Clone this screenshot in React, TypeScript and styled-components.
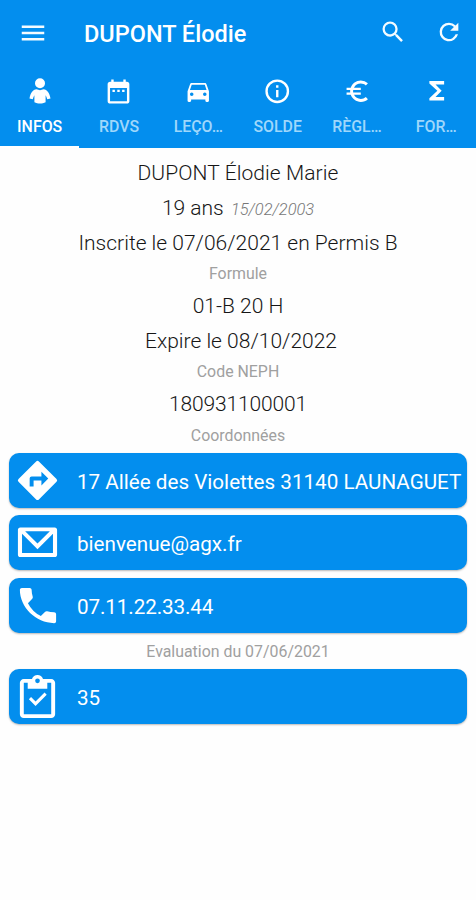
import React from 'react';
import styled, { createGlobalStyle } from 'styled-components';

const BLUE = '#038eee';

const GlobalStyle = createGlobalStyle`
  *, *::before, *::after { box-sizing: border-box; }
  body {
    margin: 0;
    background: #fefefe;
    font-family: Roboto, 'Liberation Sans', sans-serif;
  }
`;

const Screen = styled.main`
  width: 476px;
  height: 900px;
  overflow: hidden;
  background: #fefefe;
`;

const Header = styled.header`
  height: 148px;
  background: ${BLUE};
  color: #fff;
`;

const Toolbar = styled.div`
  display: flex;
  align-items: center;
  height: 66px;
  padding: 0 13px 0 17.5px;
`;

const IconButton = styled.button`
  display: flex;
  padding: 0;
  border: 0;
  background: none;
  color: #f4fbff;
`;

const Title = styled.h1`
  flex: 1;
  margin: 2px 0 0 36.5px;
  font-size: 23.5px;
  font-weight: 500;
  line-height: 28px;
`;

const Actions = styled.div`
  display: flex;
  gap: 28px;
  margin-bottom: 2px;
`;

const Tabs = styled.nav`
  display: grid;
  grid-template-columns: repeat(6, 1fr);
  height: 82px;
`;

const Tab = styled.button<{ $active?: boolean }>`
  display: flex;
  flex-direction: column;
  align-items: center;
  padding: 11px 0 0;
  border: 0;
  border-bottom: 2px solid ${(p) => (p.$active ? '#fff' : 'transparent')};
  background: none;
  color: #fff;
  font-family: inherit;
`;

const TabIcon = styled.span`
  display: flex;
  align-items: center;
  justify-content: center;
  height: 28px;
`;

const TabLabel = styled.span<{ $active?: boolean }>`
  margin-top: 12px;
  font-size: 15.9px;
  font-weight: 500;
  line-height: 20px;
  white-space: nowrap;
  color: ${(p) => (p.$active ? '#fff' : '#9fd7fb')};
`;

const Details = styled.section`
  height: 303.5px;
  padding-top: 8px;
  text-align: center;
`;

const Line = styled.p<{ $spacing?: number; $indent?: number }>`
  margin: 0;
  height: 34.8px;
  padding-left: ${(p) => p.$indent ?? 0}px;
  font-size: 21px;
  font-weight: 300;
  line-height: 35px;
  letter-spacing: ${(p) => p.$spacing ?? 0}px;
  white-space: nowrap;
  color: #161616;
`;

const BirthDate = styled.em`
  margin-left: 2px;
  font-size: 16.4px;
  color: #777;
`;

const Caption = styled.p`
  margin: 0;
  height: 28.5px;
  font-size: 15.9px;
  line-height: 28.5px;
  text-align: center;
  color: #a0a0a0;
`;

const CardList = styled.section`
  display: flex;
  flex-direction: column;
  gap: 7.75px;
  padding: 1px 9.5px 0 9px;
`;

const Card = styled.button`
  display: flex;
  align-items: center;
  height: 55px;
  padding: 0 0 0 5px;
  border: 0;
  border-radius: 10px;
  background: ${BLUE};
  box-shadow: 0 1px 2px rgba(0, 0, 0, 0.28);
  color: #fff;
  font-family: inherit;

  svg { flex: none; }
`;

const CardText = styled.span<{ $spacing?: number }>`
  margin: 3px 0 0 16px;
  font-size: 20.65px;
  line-height: 28px;
  letter-spacing: ${(p) => p.$spacing ?? 0}px;
  white-space: nowrap;
`;

const Evaluation = styled.div`
  height: 34.5px;
  padding-top: 5px;
`;

const Glyph = ({ d, size }: { d: string; size: number }) => (
  <svg width={size} height={size} viewBox="0 0 24 24" fill="currentColor" aria-hidden="true">
    <path fillRule="evenodd" d={d} />
  </svg>
);

const icons = {
  menu: 'M3 18h18v-2H3v2zm0-5h18v-2H3v2zm0-7v2h18V6H3z',
  search:
    'M15.5 14h-.79l-.28-.27A6.47 6.47 0 0 0 16 9.5 6.5 6.5 0 1 0 9.5 16c1.61 0 3.09-.59 4.23-1.57l.27.28v.79l5 4.99L20.49 19l-4.99-5zm-6 0C7.01 14 5 11.99 5 9.5S7.01 5 9.5 5 14 7.01 14 9.5 11.99 14 9.5 14z',
  refresh:
    'M17.65 6.35A7.96 7.96 0 0 0 12 4a8 8 0 1 0 7.73 10h-2.08A6 6 0 1 1 12 6c1.66 0 3.14.69 4.22 1.78L13 11h7V4l-2.35 2.35z',
  person:
    'M12 1a4.300 4.300 0 1 1 0 8.600A4.300 4.300 0 0 1 12 1zM9 10.600c1.900.9 4.100.9 6 0 3.200.4 5.200 3.200 6 7.800l-2.800.7c-.4-1.500-.8-2.600-1.400-3.400V21.600c-2.900 1.600-6.700 1.600-9.600 0V15.700c-.6.8-1 1.900-1.400 3.400L3 18.400c.8-4.600 2.800-7.400 6-7.800z',
  calendar:
    'M19 4h-1V2h-2v2H8V2H6v2H5c-1.110 0-2 .9-2 2v14c0 1.100.890 2 2 2h14c1.100 0 2-.9 2-2V6c0-1.100-.9-2-2-2zm0 16H5V9h14v11zM7 10.500h2v2H7zm4 0h2v2h-2zm4 0h2v2h-2z',
  car: 'M18.920 6.010C18.720 5.420 18.160 5 17.500 5h-11c-.660 0-1.210.420-1.420 1.010L3 12v8c0 .550.450 1 1 1h1c.550 0 1-.450 1-1v-1h12v1c0 .550.450 1 1 1h1c.550 0 1-.450 1-1v-8l-2.080-5.990zM6.500 16a1.500 1.500 0 1 1 0-3 1.500 1.500 0 0 1 0 3zm11 0a1.500 1.500 0 1 1 0-3 1.500 1.500 0 0 1 0 3zM5 11l1.500-4.500h11L19 11H5z',
  info: 'M11 7h2v2h-2zm0 4h2v6h-2zm1-9a10 10 0 1 0 0 20 10 10 0 0 0 0-20zm0 18a8 8 0 1 1 0-16 8 8 0 0 1 0 16z',
  euro: 'M15 18.500c-2.510 0-4.680-1.420-5.760-3.500H15v-2H8.580c-.050-.330-.080-.660-.080-1s.030-.670.080-1H15V9H9.240A6.490 6.490 0 0 1 15 5.500c1.610 0 3.090.590 4.230 1.570L21 5.300A8.960 8.960 0 0 0 15 3c-3.920 0-7.240 2.510-8.480 6H3v2h3.060a8.260 8.260 0 0 0 0 2H3v2h3.520c1.240 3.490 4.560 6 8.480 6 2.310 0 4.410-.870 6-2.300l-1.780-1.770A6.420 6.420 0 0 1 15 18.500z',
  sigma: 'M18 4H6v2l6.500 6L6 18v2h12v-3h-7l5-5-5-5h7z',
  directions:
    'M21.710 11.290l-9-9a.996.996 0 0 0-1.410 0l-9 9a.996.996 0 0 0 0 1.410l9 9c.390.390 1.020.390 1.410 0l9-9a.996.996 0 0 0 0-1.410zM14 14.500V12h-4v3H8v-4c0-.550.450-1 1-1h5V7.500l3.500 3.500-3.500 3.500z',
  mail: 'M22 5.500c0-.700-.500-1.200-1.200-1.200H3.200C2.500 4.300 2 4.800 2 5.500v12.700c0 .700.500 1.200 1.200 1.200h17.600c.700 0 1.200-.500 1.200-1.200V5.500zM18.300 6.200 12 12.500 5.700 6.200h12.600zM4.100 17.400V7.500l7.900 7.900 7.900-7.900v9.900H4.100z',
  phone:
    'M4.500 3H8c.55 0 1 .45 1 1 0 1.250.2 2.450.570 3.570.110.350.030.740-.250 1.020l-2.200 2.200a15.150 15.150 0 0 0 6.590 6.590l2.200-2.200c.280-.280.670-.360 1.020-.250 1.120.370 2.320.570 3.570.570.550 0 1 .450 1 1V20c0 .550-.450 1-1 1C11.110 21 3 12.890 3 4c0-.550.450-1 1-1z',
  clipboard:
    'M19 3h-4.180C14.400 1.840 13.300 1 12 1s-2.400.840-2.820 2H5c-1.100 0-2 .900-2 2v16c0 1.100.9 2 2 2h14c1.100 0 2-.9 2-2V5c0-1.100-.9-2-2-2zm-7-.2a1.200 1.200 0 1 1 0 2.400 1.200 1.200 0 0 1 0-2.400zM5 5h2v3h10V5h2v16H5zm3.700 7.300L7.600 13.400l3.400 3.400 5.700-5.700-1.100-1.100L11 14.600z',
};

const tabs = [
  { label: 'INFOS', icon: icons.person, size: 28 },
  { label: 'RDVS', icon: icons.calendar, size: 29 },
  { label: 'LEÇO…', icon: icons.car, size: 28.5 },
  { label: 'SOLDE', icon: icons.info, size: 28.5 },
  { label: 'RÈGL…', icon: icons.euro, size: 28.5 },
  { label: 'FOR…', icon: icons.sigma, size: 29.5 },
];

const contacts = [
  { icon: icons.directions, text: '17 Allée des Violettes 31140 LAUNAGUET', spacing: 0 },
  { icon: icons.mail, text: 'bienvenue@agx.fr', spacing: 0 },
  { icon: icons.phone, text: '07.11.22.33.44', spacing: -0.1 },
];

export default function App() {
  return (
    <Screen>
      <GlobalStyle />
      <Header>
        <Toolbar>
          <IconButton aria-label="Menu"><Glyph d={icons.menu} size={30} /></IconButton>
          <Title>DUPONT Élodie</Title>
          <Actions>
            <IconButton aria-label="Rechercher"><Glyph d={icons.search} size={28} /></IconButton>
            <IconButton aria-label="Actualiser"><Glyph d={icons.refresh} size={28} /></IconButton>
          </Actions>
        </Toolbar>
        <Tabs>
          {tabs.map((tab, i) => (
            <Tab key={tab.label} $active={i === 0}>
              <TabIcon><Glyph d={tab.icon} size={tab.size} /></TabIcon>
              <TabLabel $active={i === 0}>{tab.label}</TabLabel>
            </Tab>
          ))}
        </Tabs>
      </Header>
      <Details>
        <Line $spacing={0.08}>DUPONT Élodie Marie</Line>
        <Line>19 ans <BirthDate>15/02/2003</BirthDate></Line>
        <Line>Inscrite le 07/06/2021 en Permis B</Line>
        <Caption>Formule</Caption>
        <Line>01-B 20 H</Line>
        <Line $indent={6}>Expire le 08/10/2022</Line>
        <Caption>Code NEPH</Caption>
        <Line $spacing={-0.15}>180931100001</Line>
        <Caption>Coordonnées</Caption>
      </Details>
      <CardList>
        {contacts.map((c) => (
          <Card key={c.text}>
            <Glyph d={c.icon} size={47} />
            <CardText $spacing={c.spacing}>{c.text}</CardText>
          </Card>
        ))}
      </CardList>
      <Evaluation>
        <Caption>Evaluation du 07/06/2021</Caption>
      </Evaluation>
      <CardList>
        <Card>
          <Glyph d={icons.clipboard} size={47} />
          <CardText>35</CardText>
        </Card>
      </CardList>
    </Screen>
  );
}
